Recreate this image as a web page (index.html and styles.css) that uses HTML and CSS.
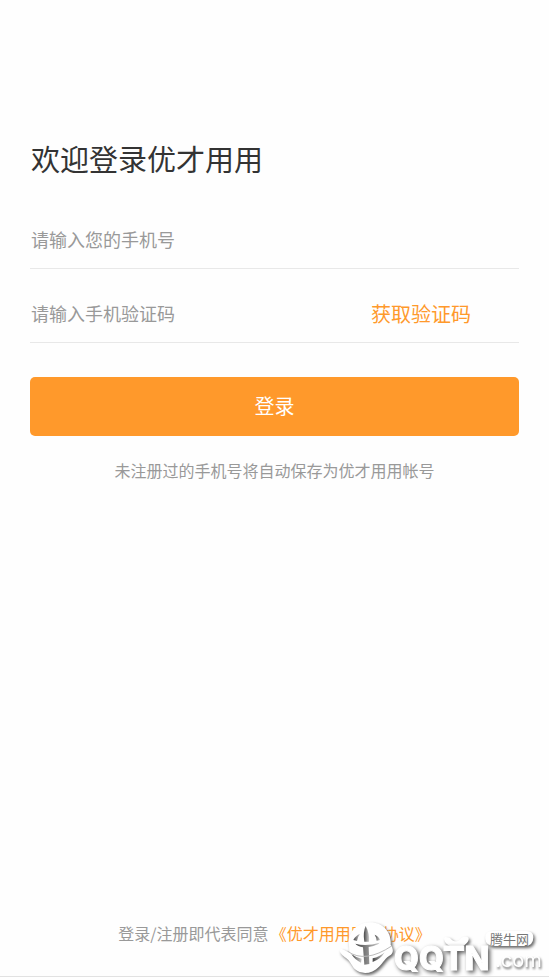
FILE: index.html
```html
<!DOCTYPE html>
<html lang="zh-CN">
<head>
  <meta charset="utf-8">
  <meta name="viewport" content="width=device-width, initial-scale=1">
  <title>登录</title>
  <link rel="stylesheet" href="styles.css">
</head>
<body>
  <main class="login">
    <h1 class="title">欢迎登录优才用用</h1>
    <form class="form">
      <div class="field">
        <input class="input" type="tel" aria-label="手机号" placeholder="请输入您的手机号">
      </div>
      <div class="field">
        <input class="input" type="text" aria-label="验证码" placeholder="请输入手机验证码">
        <button class="get-code" type="button">获取验证码</button>
      </div>
      <button class="submit" type="submit">登录</button>
    </form>
    <p class="hint">未注册过的手机号将自动保存为优才用用帐号</p>
  </main>
  <footer class="footer">
    <p class="terms">登录/注册即代表同意<a class="link" href="#">《优才用用服务协议》</a></p>
    <svg class="watermark" viewBox="0 0 219 67" role="img" aria-label="腾牛网 QQTN.com">
      <defs>
        <linearGradient id="shade" x1="0" y1="0" x2="1" y2="0">
          <stop offset="0" stop-color="#444"/>
          <stop offset="1" stop-color="#ccc"/>
        </linearGradient>
      </defs>
      <svg width="219" height="67" viewBox="0 0 657 201">
        <g class="raised">
          <path d="M57 108C50 72 78 38 120 37C160 37 185 68 182 104C190 116 191 126 183 134C166 142 159 159 147 170C126 193 93 194 75 178C64 166 61 152 47 143C36 135 25 124 31 118C36 114 47 124 58 127Z"/>
          <path fill-rule="evenodd" d="M345 81C354 81 361 83 366 90C373 96 386 95 391 87C395 80 406 77 414 82C420 88 413 99 403 106C391 114 366 113 355 106C344 99 339 85 345 81Z"/>
          <path d="M486 63H588Q610 63 610 82Q610 108 584 108H491Q468 108 466 88Q463 64 486 63Z"/>
        </g>
        <g class="cut">
          <path d="M107 48Q119 70 117 95H103Q98 68 107 48Z"/>
          <path d="M90 72Q78 76 70 90L81 93Q82 82 90 72Z"/>
          <path d="M134 74Q147 80 150 90L140 92Q139 82 134 74Z"/>
          <path d="M76 101Q109 110 149 98L144 103Q130 109 116 111L118 162L103 164L99 112Q83 109 76 101Z"/>
          <path d="M64 132Q80 144 95 146L93 158Q75 150 64 132Z"/>
          <path d="M128 145Q149 141 164 127Q151 149 128 156Z"/>
        </g>
        <path class="crease" d="M53 124Q105 161 185 108"/>
      </svg>
      <text class="brand" x="64" y="60">QQTN</text>
      <text class="domain" x="165" y="57">.com</text>
      <text class="site" x="160" y="34">腾牛网</text>
    </svg>
  </footer>
</body>
</html>
```
FILE: styles.css
```css
* {
  box-sizing: border-box;
}

body {
  margin: 0;
  min-height: 100vh;
  display: flex;
  flex-direction: column;
  background: #fefefe;
  color: #333;
  font-family: "Noto Sans CJK SC", sans-serif;
  border-bottom: 1px solid #e2e2e2;
}

.login {
  flex: 1;
  padding: 137px 30px 0;
}

.title {
  margin: 0 0 36px;
  padding: 0 1px;
  font-size: 29px;
  line-height: 42px;
  font-weight: 400;
}

.form {
  display: flex;
  flex-direction: column;
}

.field {
  display: flex;
  align-items: flex-start;
  height: 54px;
  margin-bottom: 20px;
  border-bottom: 1px solid #e8e8e8;
}

.input {
  flex: 1;
  min-width: 0;
  height: 48px;
  padding: 0 1px;
  border: 0;
  outline: 0;
  background: transparent;
  color: #333;
  font: inherit;
  font-size: 18px;
}

.input::placeholder {
  color: #999;
  opacity: 1;
}

.get-code {
  height: 48px;
  margin-right: 42px;
  padding: 0 6px;
  border: 0;
  background: transparent;
  color: #ff992b;
  font: inherit;
  font-size: 20px;
}

.submit {
  height: 59px;
  margin-top: 14px;
  padding: 0 0 2px;
  border: 0;
  border-radius: 5px;
  background: #ff992b;
  color: #fff;
  font: inherit;
  font-size: 20px;
}

.hint {
  margin: 22px 0 0;
  color: #999;
  font-size: 16px;
  line-height: 24px;
  text-align: center;
}

.footer {
  position: relative;
  padding: 0 0 31px;
}

.terms {
  margin: 0;
  color: #999;
  font-size: 16px;
  line-height: 24px;
  text-align: center;
}

.link {
  padding-left: 2px;
  color: #ff992b;
  text-decoration: none;
}

.watermark {
  position: absolute;
  right: 0;
  bottom: -1px;
  width: 219px;
  height: 67px;
}

.raised {
  fill: #fff;
  filter: drop-shadow(5px 6px 4px #666);
}

.cut {
  fill: url(#shade);
}

.crease {
  fill: none;
  stroke: #bbb;
  stroke-width: 3;
}

.brand,
.domain {
  fill: #fff;
  font-family: Inter, sans-serif;
}

.brand {
  font-size: 32px;
  font-weight: 800;
  stroke: #fff;
  stroke-width: 1px;
  filter: drop-shadow(2px 2px 2px #555);
}

.domain {
  font-size: 20px;
  filter: drop-shadow(1px 2px 1px #666);
}

.site {
  fill: #777;
  font-size: 13px;
}
```
